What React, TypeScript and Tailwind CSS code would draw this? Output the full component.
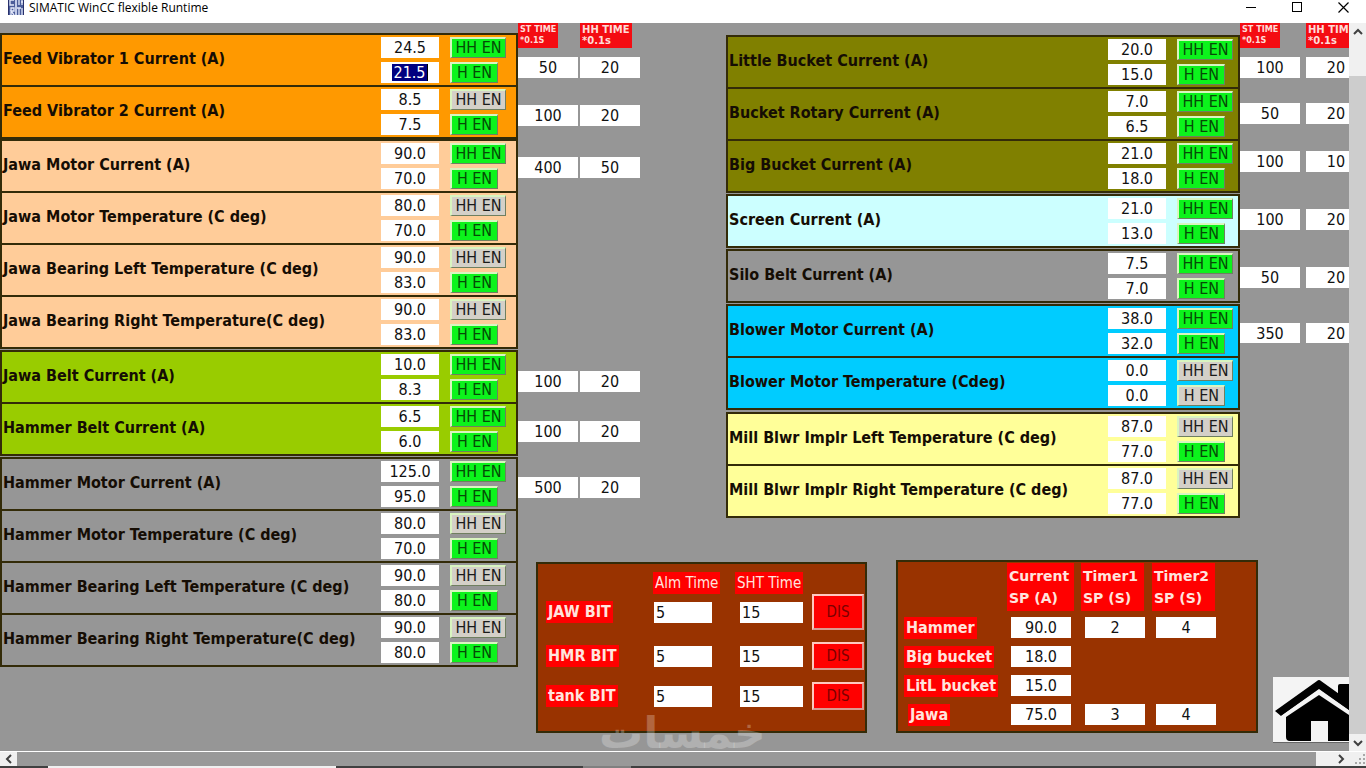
import React from 'react';
import { clsx } from 'clsx';

interface Sensor {
    name: string;
    hh: string;
    h: string;
    hhOn: boolean;
    hOn: boolean;
    editing?: boolean;
}

interface SensorGroup {
    color: string;
    space?: string;
    rows: Sensor[];
}

interface TimerRow {
    st: string;
    hh: string;
    space: string;
}

const sensor = (name: string, hh: string, h: string, hhOn = true, hOn = true, editing = false): Sensor => ({
    name, hh, h, hhOn, hOn, editing,
});

const leftGroups: SensorGroup[] = [
    {
        color: 'bg-[#ff9900]',
        rows: [
            sensor('Feed Vibrator 1 Current (A)', '24.5', '21.5', true, true, true),
            sensor('Feed Vibrator 2 Current (A)', '8.5', '7.5', false),
        ],
    },
    {
        color: 'bg-[#ffcc99]',
        rows: [
            sensor('Jawa Motor Current (A)', '90.0', '70.0'),
            sensor('Jawa Motor Temperature (C deg)', '80.0', '70.0', false),
            sensor('Jawa Bearing Left Temperature (C deg)', '90.0', '83.0', false),
            sensor('Jawa Bearing Right Temperature(C deg)', '90.0', '83.0', false),
        ],
    },
    {
        color: 'bg-[#99cc00]',
        space: 'mt-px',
        rows: [
            sensor('Jawa Belt Current (A)', '10.0', '8.3'),
            sensor('Hammer Belt Current (A)', '6.5', '6.0'),
        ],
    },
    {
        color: 'bg-[#969696]',
        space: 'mt-px',
        rows: [
            sensor('Hammer Motor Current (A)', '125.0', '95.0'),
            sensor('Hammer Motor Temperature (C deg)', '80.0', '70.0', false),
            sensor('Hammer Bearing Left Temperature (C deg)', '90.0', '80.0', false),
            sensor('Hammer Bearing Right Temperature(C deg)', '90.0', '80.0', false),
        ],
    },
];

const rightGroups: SensorGroup[] = [
    {
        color: 'bg-[#808000]',
        rows: [
            sensor('Little Bucket Current (A)', '20.0', '15.0'),
            sensor('Bucket Rotary Current (A)', '7.0', '6.5'),
            sensor('Big Bucket Current (A)', '21.0', '18.0'),
        ],
    },
    { color: 'bg-[#ccffff]', space: 'mt-px', rows: [sensor('Screen Current (A)', '21.0', '13.0')] },
    { color: 'bg-[#969696]', space: 'mt-px', rows: [sensor('Silo Belt Current (A)', '7.5', '7.0')] },
    {
        color: 'bg-[#00ccff]',
        space: 'mt-px',
        rows: [
            sensor('Blower Motor Current (A)', '38.0', '32.0'),
            sensor('Blower Motor Temperature (Cdeg)', '0.0', '0.0', false, false),
        ],
    },
    {
        color: 'bg-[#ffff99]',
        space: 'mt-[2px]',
        rows: [
            sensor('Mill Blwr Implr Left Temperature (C deg)', '87.0', '77.0', false),
            sensor('Mill Blwr Implr Right Temperature (C deg)', '87.0', '77.0', false),
        ],
    },
];

const leftTimers: TimerRow[] = [
    { st: '50', hh: '20', space: 'mt-[9px]' },
    { st: '100', hh: '20', space: 'mt-7' },
    { st: '400', hh: '50', space: 'mt-8' },
    { st: '100', hh: '20', space: 'mt-[194px]' },
    { st: '100', hh: '20', space: 'mt-[30px]' },
    { st: '500', hh: '20', space: 'mt-9' },
];

const rightTimers: TimerRow[] = [
    { st: '100', hh: '20', space: 'mt-[9px]' },
    { st: '50', hh: '20', space: 'mt-[26px]' },
    { st: '100', hh: '10', space: 'mt-7' },
    { st: '100', hh: '20', space: 'mt-[38px]' },
    { st: '50', hh: '20', space: 'mt-[38px]' },
    { st: '350', hh: '20', space: 'mt-9' },
];

const bits = [
    { name: 'JAW BIT', alm: '5', sht: '15', height: 'h-9' },
    { name: 'HMR BIT', alm: '5', sht: '15', height: 'h-7' },
    { name: 'tank BIT', alm: '5', sht: '15', height: 'h-7' },
];

const setpoints = [
    { name: 'Hammer', values: ['90.0', '2', '4'] },
    { name: 'Big bucket', values: ['18.0'] },
    { name: 'LitL bucket', values: ['15.0'] },
    { name: 'Jawa', values: ['75.0', '3', '4'] },
];

const Field: React.FC<{ label: string; value: string; id?: string; className?: string }> = ({ label, value, id, className }) => (
    <input
        id={id}
        aria-label={label}
        defaultValue={value}
        className={clsx('block h-[21px] bg-white text-[16px] leading-5 text-[#111] outline-none', className)}
    />
);

const EnableButton: React.FC<{ text: string; on: boolean; wide?: boolean }> = ({ text, on, wide }) => (
    <button
        className={clsx(
            'flex h-[21px] items-center justify-center border-2 border-r border-b border-t-[#d9f5c0] border-l-[#d9f5c0] border-r-[#6f7f60] border-b-[#6f7f60] text-[16px] leading-4',
            wide ? 'w-14' : 'w-12',
            on ? 'bg-[#0cf31c] text-[#064a06]' : 'bg-[#d4d0c8] text-[#1a1a1a]',
        )}
    >
        {text}
    </button>
);

const SensorRow: React.FC<{ row: Sensor; endPad: string }> = ({ row, endPad }) => {
    const id = row.name.replace(/\W+/g, '-').toLowerCase();
    return (
        <div className={clsx('flex h-[52px] items-center border-b-2 border-[#332b08] pl-px', endPad)}>
            <label htmlFor={id} className="flex-1 pb-[2px] text-[16px] leading-5 font-bold whitespace-nowrap text-[#150d04]">{row.name}</label>
            <div className="mr-[11px] flex flex-col gap-1">
                <Field id={id} label={`${row.name} HH`} value={row.hh} className="w-[58px] text-center" />
                {row.editing ? (
                    <div className="flex h-[21px] w-[58px] justify-center bg-white py-[2px]">
                        <input
                            aria-label={`${row.name} H`}
                            defaultValue={row.h}
                            className="w-9 border-r border-black bg-[#000080] text-center text-[16px] leading-4 text-white outline-none"
                        />
                    </div>
                ) : (
                    <Field label={`${row.name} H`} value={row.h} className="w-[58px] text-center" />
                )}
            </div>
            <div className="flex w-14 flex-col gap-1">
                <EnableButton text="HH EN" on={row.hhOn} wide />
                <EnableButton text="H EN" on={row.hOn} />
            </div>
        </div>
    );
};

const SensorPanels: React.FC<{ groups: SensorGroup[]; endPad: string }> = ({ groups, endPad }) => (
    <div className="flex flex-col">
        {groups.map(group => (
            <div key={group.rows[0].name} className={clsx('border-2 border-b-0 border-[#332b08]', group.color, group.space)}>
                {group.rows.map(row => <SensorRow key={row.name} row={row} endPad={endPad} />)}
            </div>
        ))}
    </div>
);

const TimerColumn: React.FC<{ rows: TimerRow[]; gap: string }> = ({ rows, gap }) => (
    <div>
        <div className={clsx('flex', gap)}>
            <div className="w-[60px] shrink-0">
                <div className="h-[25px] w-10 bg-[#f40c12] pt-px pl-[2px] text-[9px] leading-[11px] font-bold whitespace-nowrap text-[#ffdcd8]">
                    ST TIME<br />*0.1S
                </div>
            </div>
            <div className="h-[25px] w-[52px] shrink-0 bg-[#f40c12] pt-px pl-[2px] font-['DejaVu_Sans',sans-serif] text-[10px] leading-[11px] font-bold whitespace-nowrap text-[#ffdcd8]">
                HH TIME<br />*0.1s
            </div>
        </div>
        {rows.map((row, i) => (
            <div key={i} className={clsx('flex', gap, row.space)}>
                <Field label={`ST time ${i + 1}`} value={row.st} className="-mb-px w-[60px] shrink-0 text-center" />
                <Field label={`HH time ${i + 1}`} value={row.hh} className="-mb-px w-[60px] shrink-0 text-center" />
            </div>
        ))}
    </div>
);

const BitPanel: React.FC = () => (
    <section className="mt-[2px] h-[171px] w-[331px] shrink-0 border-2 border-[#332b08] bg-[#993300] pt-2 pl-2">
        <div className="flex h-[22px] text-[15px] leading-[22px] text-[#ffe4de]">
            <div className="ml-[107px] w-[82px]"><span className="inline-block bg-[#ff0000] px-0.5">Alm Time</span></div>
            <div><span className="inline-block bg-[#ff0000] px-0.5">SHT Time</span></div>
        </div>
        <div className="flex flex-col gap-3">
            {bits.map(bit => (
                <div key={bit.name} className={clsx('flex items-center', bit.height)}>
                    <div className="w-[108px]">
                        <label htmlFor={bit.name} className="inline-block bg-[#ff0000] px-0.5 text-[16px] leading-[22px] font-bold text-[#ffe4de]">{bit.name}</label>
                    </div>
                    <Field id={bit.name} label={`${bit.name} alarm time`} value={bit.alm} className="mr-7 w-[58px] pl-0.5" />
                    <Field label={`${bit.name} shutdown time`} value={bit.sht} className="mr-[9px] w-[63px] pl-0.5" />
                    <button className="h-full w-[52px] border-2 border-t-[#ffc9c0] border-l-[#ffc9c0] border-r-[#d99a90] border-b-[#d99a90] bg-[#ff0000] text-[15px] leading-4 text-[#7a0000]">
                        DIS
                    </button>
                </div>
            ))}
        </div>
    </section>
);

const SetpointPanel: React.FC = () => (
    <section className="ml-[29px] h-[173px] w-[362px] shrink-0 border-2 border-[#332b08] bg-[#993300] pt-px pl-[6px]">
        <table className="table-fixed border-collapse text-left">
            <thead>
                <tr className="h-[50px] align-top font-['DejaVu_Sans',sans-serif] text-[14px] leading-[22px] text-[#ffe4de]">
                    <td className="w-[103px]" />
                    <th className="w-[74px] p-0"><div className="h-12 w-[67px] bg-[#ff0000] px-0.5 pt-0.5">Current SP (A)</div></th>
                    <th className="w-[71px] p-0"><div className="h-12 w-[63px] bg-[#ff0000] px-0.5 pt-0.5">Timer1 SP (S)</div></th>
                    <th className="w-[71px] p-0"><div className="h-12 w-[63px] bg-[#ff0000] px-0.5 pt-0.5">Timer2 SP (S)</div></th>
                </tr>
            </thead>
            <tbody>
                {setpoints.map(sp => (
                    <tr key={sp.name} className="h-[29px]">
                        <th className="p-0 leading-none">
                            <span className={clsx('inline-block bg-[#ff0000] px-0.5 text-[16px] leading-[22px] text-[#ffe4de]', sp.name === 'Jawa' && 'ml-1')}>{sp.name}</span>
                        </th>
                        {sp.values.map((value, i) => (
                            <td key={i} className="p-0 pl-1">
                                <Field label={`${sp.name} setpoint ${i + 1}`} value={value} className="w-[60px] text-center" />
                            </td>
                        ))}
                    </tr>
                ))}
            </tbody>
        </table>
    </section>
);

const HomeButton: React.FC = () => (
    <button aria-label="Home" className="mt-[117px] ml-[15px] h-[66px] min-w-0 flex-1 overflow-hidden border-b border-[#666] bg-[#f4f4f4]">
        <svg width="92" height="64" viewBox="0 0 92 64" className="max-w-none">
            <path d="M13 39 L46 17 L79 39 V59 Q79 63 75 63 H55 V43 H38 V63 H17 Q13 63 13 59 Z" fill="#000" />
            <path d="M65 20 V8 Q65 6 67 6 H78 V30 Z" fill="#000" />
            <path d="M2 33 L44 3 Q46 1 48 3 L90 33 L84 38 L46 11 L8 38 Z" fill="#000" />
            <path d="M8 40 L46 13.5 L84 40" fill="none" stroke="#f4f4f4" strokeWidth="3" />
        </svg>
    </button>
);

const Chevron: React.FC<{ d: string }> = ({ d }) => (
    <svg width="10" height="10" viewBox="0 0 10 10" fill="none" stroke="#404040" strokeWidth="2"><path d={d} /></svg>
);

const TitleBar: React.FC = () => (
    <header className="flex h-[23px] items-start bg-white pl-2">
        <svg width="16" height="15" viewBox="0 0 16 15">
            <rect width="16" height="15" fill="#4b5d9a" />
            <path d="M7 0 H9 V15 H7 Z" fill="#c3cce8" />
            <path d="M6 0 H2 V5 H6 M11 0 V5 M14 0 V5 M13 2 H16 M3 15 V8 H6 V11 H3 L6 15 M11 8 V15 M14 8 V15 M9 8 H13" fill="none" stroke="#e4e9fa" strokeWidth="1.3" />
            <path d="M0.5 0 V15 M15.5 0 V15" stroke="#28306b" strokeWidth="1" />
        </svg>
        <h1 className="ml-[5px] flex-1 font-['Open_Sans','Noto_Sans',sans-serif] text-[12px] leading-4 text-black">SIMATIC WinCC flexible Runtime</h1>
        <div className="flex">
            <button aria-label="Minimize" className="flex h-[14px] w-[46px] items-center justify-center">
                <svg width="10" height="10" viewBox="0 0 10 10"><path d="M0 5.5 H10" stroke="#000" /></svg>
            </button>
            <button aria-label="Maximize" className="flex h-[14px] w-[46px] items-center justify-center">
                <svg width="10" height="10" viewBox="0 0 10 10"><rect x="0.5" y="0.5" width="9" height="9" fill="none" stroke="#000" /></svg>
            </button>
            <button aria-label="Close" className="flex h-[14px] w-[46px] items-center justify-center">
                <svg width="11" height="11" viewBox="0 0 11 11"><path d="M0.5 0.5 L10.5 10.5 M10.5 0.5 L0.5 10.5" stroke="#000" strokeWidth="1.2" /></svg>
            </button>
        </div>
    </header>
);

export default function App() {
    return (
        <div className="flex min-h-screen flex-col overflow-hidden bg-[#969696] font-['DejaVu_Sans_Condensed','DejaVu_Sans',sans-serif]">
            <TitleBar />
            <div className="flex flex-1">
                <main className="relative flex min-w-0 flex-1 items-start overflow-hidden">
                    <div className="w-[38.4%] pt-[10px]">
                        <SensorPanels groups={leftGroups} endPad="pr-[10px]" />
                    </div>
                    <div className="min-w-0 flex-1">
                        <div className="flex items-start">
                            <TimerColumn rows={leftTimers} gap="gap-[2px]" />
                            <div className="ml-[86px] flex-1 pt-3">
                                <SensorPanels groups={rightGroups} endPad="pr-[5px]" />
                            </div>
                            <div className="w-[109px] overflow-hidden">
                                <TimerColumn rows={rightTimers} gap="gap-[6px]" />
                            </div>
                        </div>
                        <div className="mt-[42px] flex items-start pl-[18px]">
                            <BitPanel />
                            <SetpointPanel />
                            <HomeButton />
                        </div>
                    </div>
                    <div dir="rtl" className="absolute bottom-0 left-[44.4%] font-['DejaVu_Sans',sans-serif] text-[44px] leading-[36px] font-bold whitespace-nowrap text-white/25">
                        خمسات
                    </div>
                </main>
                <div className="flex w-[17px] flex-col items-center bg-[#cdcdcd]">
                    <div className="flex h-[53px] w-full justify-center bg-[#f0f0f0] pt-1">
                        <Chevron d="M1 7 L5 3 L9 7" />
                    </div>
                    <div className="flex-1" />
                    <div className="flex h-[17px] w-full items-center justify-center bg-[#f0f0f0]">
                        <Chevron d="M1 3 L5 7 L9 3" />
                    </div>
                </div>
            </div>
            <div className="flex h-[15px] border-t border-white bg-[#999999]">
                <div className="flex w-[17px] items-center justify-center bg-[#f0f0f0]"><Chevron d="M7 1 L3 5 L7 9" /></div>
                <div className="flex-1" />
                <div className="flex w-[50px] items-center bg-[#f0f0f0] pl-5">
                    <Chevron d="M3 1 L7 5 L3 9" />
                    <svg width="12" height="12" viewBox="0 0 12 12" className="ml-2" fill="#a8a8a8">
                        <path d="M9 1h2v2H9z M9 5h2v2H9z M9 9h2v2H9z M5 5h2v2H5z M5 9h2v2H5z M1 9h2v2H1z" />
                    </svg>
                </div>
            </div>
            <div className="flex h-[2px] bg-[#404040]">
                <div className="ml-12 w-72 bg-[#f0f0f0]" />
                <div className="ml-[247px] w-12 bg-[#808080]" />
            </div>
        </div>
    );
}
